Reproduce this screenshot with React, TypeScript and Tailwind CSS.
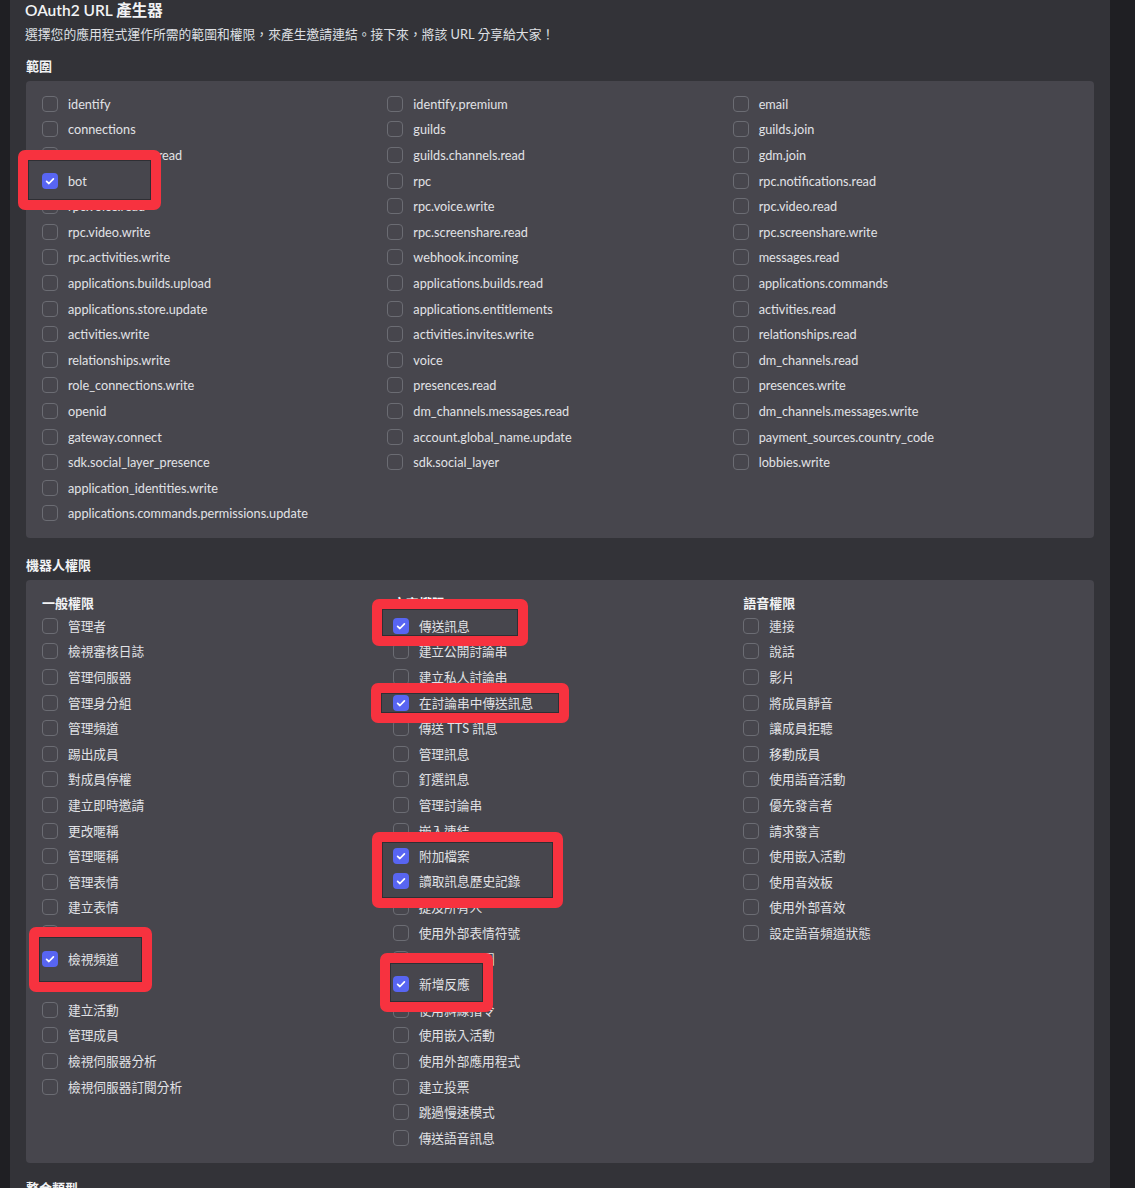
import React from "react";

const scopeCols: string[][] = [
  [
    "identify",
    "connections",
    "guilds.members.read",
    "bot",
    "rpc.voice.read",
    "rpc.video.write",
    "rpc.activities.write",
    "applications.builds.upload",
    "applications.store.update",
    "activities.write",
    "relationships.write",
    "role_connections.write",
    "openid",
    "gateway.connect",
    "sdk.social_layer_presence",
    "application_identities.write",
    "applications.commands.permissions.update",
  ],
  [
    "identify.premium",
    "guilds",
    "guilds.channels.read",
    "rpc",
    "rpc.voice.write",
    "rpc.screenshare.read",
    "webhook.incoming",
    "applications.builds.read",
    "applications.entitlements",
    "activities.invites.write",
    "voice",
    "presences.read",
    "dm_channels.messages.read",
    "account.global_name.update",
    "sdk.social_layer",
  ],
  [
    "email",
    "guilds.join",
    "gdm.join",
    "rpc.notifications.read",
    "rpc.video.read",
    "rpc.screenshare.write",
    "messages.read",
    "applications.commands",
    "activities.read",
    "relationships.read",
    "dm_channels.read",
    "presences.write",
    "dm_channels.messages.write",
    "payment_sources.country_code",
    "lobbies.write",
  ],
];

const permCols: { title: string; items: string[] }[] = [
  {
    title: "一般權限",
    items: [
      "管理者",
      "檢視審核日誌",
      "管理伺服器",
      "管理身分組",
      "管理頻道",
      "踢出成員",
      "對成員停權",
      "建立即時邀請",
      "更改暱稱",
      "管理暱稱",
      "管理表情",
      "建立表情",
      "管理 Webhook",
      "檢視頻道",
      "管理活動",
      "建立活動",
      "管理成員",
      "檢視伺服器分析",
      "檢視伺服器訂閱分析",
    ],
  },
  {
    title: "文字權限",
    items: [
      "傳送訊息",
      "建立公開討論串",
      "建立私人討論串",
      "在討論串中傳送訊息",
      "傳送 TTS 訊息",
      "管理訊息",
      "釘選訊息",
      "管理討論串",
      "嵌入連結",
      "附加檔案",
      "讀取訊息歷史記錄",
      "提及所有人",
      "使用外部表情符號",
      "使用外部貼圖",
      "新增反應",
      "使用斜線指令",
      "使用嵌入活動",
      "使用外部應用程式",
      "建立投票",
      "跳過慢速模式",
      "傳送語音訊息",
    ],
  },
  {
    title: "語音權限",
    items: [
      "連接",
      "說話",
      "影片",
      "將成員靜音",
      "讓成員拒聽",
      "移動成員",
      "使用語音活動",
      "優先發言者",
      "請求發言",
      "使用嵌入活動",
      "使用音效板",
      "使用外部音效",
      "設定語音頻道狀態",
    ],
  },
];

const checked = new Set([
  "bot",
  "傳送訊息",
  "在討論串中傳送訊息",
  "附加檔案",
  "讀取訊息歷史記錄",
  "檢視頻道",
  "新增反應",
]);

function Box({ on }: { on: boolean }) {
  if (on) {
    return (
      <span className="flex h-4 w-4 shrink-0 items-center justify-center rounded-[4px] bg-[#5865f2]">
        <svg width="16" height="16" viewBox="0 0 16 16" fill="none">
          <path
            d="M4.6 8.4 L6.9 10.5 L11.4 5.8"
            stroke="white"
            strokeWidth="1.7"
            strokeLinecap="round"
            strokeLinejoin="round"
          />
        </svg>
      </span>
    );
  }
  return <span className="h-4 w-4 shrink-0 rounded-[4px] border border-[#6b6c73]" />;
}

function Row({ label }: { label: string }) {
  return (
    <div className="flex h-[25.6px] items-center gap-[10px]">
      <Box on={checked.has(label)} />
      <span className="whitespace-nowrap text-[12.7px] leading-4 text-[#e1e2e6]">{label}</span>
    </div>
  );
}

// red highlight boxes pasted over the list
function Mark({ className, inner, rows }: { className: string; inner: string; rows: string[] }) {
  return (
    <div
      className={
        "absolute overflow-hidden rounded-[7px] border-[10px] border-[#f7323f] bg-[#47464d] shadow-[inset_0_0_0_1px_#2f2f34] " +
        className
      }
    >
      <div className={inner}>
        {rows.map((r) => (
          <Row key={r} label={r} />
        ))}
      </div>
    </div>
  );
}

export default function App() {
  return (
    <div
      className="relative flex min-h-screen bg-[#333338] text-[#e1e2e6]"
      style={{ fontFamily: 'Lato, "Noto Sans CJK TC", "Noto Sans", sans-serif' }}
    >
      <div className="w-[10px] shrink-0 bg-[#1f1f23]" />
      <main className="flex-1 px-4">
        <h1 className="-ml-[1px] h-5 text-[15.5px] font-semibold leading-5 text-[#f2f3f5]">
          OAuth2 URL 產生器
        </h1>
        <p className="-ml-[1px] mt-[6px] text-[12.8px] leading-4 text-[#dfe0e4]">
          選擇您的應用程式運作所需的範圍和權限，來產生邀請連結。接下來，將該 URL 分享給大家！
        </p>

        <h2 className="mt-4 text-[13px] font-bold leading-4 text-[#f2f3f5]">範圍</h2>
        <div className="mt-[7px] grid grid-cols-3 rounded-[4px] bg-[#47464d] px-4 pb-3 pt-[10px]">
          {scopeCols.map((col, i) => (
            <div key={i} className="flex flex-col">
              {col.map((s) => (
                <Row key={s} label={s} />
              ))}
            </div>
          ))}
        </div>

        <h2 className="mt-[19px] text-[13px] font-bold leading-4 text-[#f2f3f5]">機器人權限</h2>
        <div className="mt-[7px] grid grid-cols-3 gap-x-4 rounded-[4px] bg-[#47464d] px-4 pb-3 pt-[14px]">
          {permCols.map((col) => (
            <div key={col.title} className="flex flex-col">
              <div className="h-[19px] text-[13px] font-bold leading-[19px] text-[#f2f3f5]">{col.title}</div>
              {col.items.map((s) => (
                <Row key={s} label={s} />
              ))}
            </div>
          ))}
        </div>

        <h2 className="mt-[17px] text-[13px] font-bold leading-4 text-[#f2f3f5]">整合類型</h2>
        <div className="mt-[7px] h-[120px] rounded-[4px] bg-[#47464d]" />
      </main>
      <div className="w-[25px] shrink-0 bg-[#1f1f23]" />

      <Mark className="left-[18px] top-[150px] h-[60px] w-[143px]" inner="pl-[14px] pt-[8px]" rows={["bot"]} />
      <Mark className="left-[29px] top-[927px] h-[65px] w-[123px]" inner="pl-[3px] pt-[9px]" rows={["檢視頻道"]} />
      <Mark className="left-[372px] top-[599px] h-[47px] w-[156px]" inner="pl-[11px] pt-[4px]" rows={["傳送訊息"]} />
      <Mark
        className="left-[371px] top-[683px] h-[40px] w-[198px]"
        inner="-mt-[3px] pl-[12px]"
        rows={["在討論串中傳送訊息"]}
      />
      <Mark
        className="left-[372px] top-[832px] h-[76px] w-[191px]"
        inner="pl-[11px] pt-[1px]"
        rows={["附加檔案", "讀取訊息歷史記錄"]}
      />
      <Mark className="left-[380px] top-[953px] h-[59px] w-[113px]" inner="pl-[3px] pt-[8px]" rows={["新增反應"]} />
    </div>
  );
}
